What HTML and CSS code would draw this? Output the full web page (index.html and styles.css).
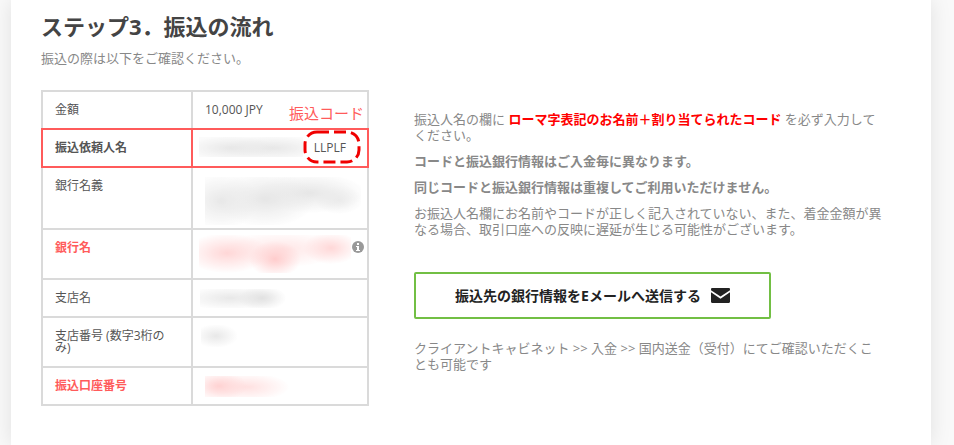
FILE: index.html
```html
<!DOCTYPE html>
<html lang="ja">
<head>
    <meta charset="UTF-8">
    <meta name="viewport" content="width=device-width, initial-scale=1.0">
    <title>振込の流れ</title>
    <link rel="stylesheet" href="styles.css">
</head>
<body>
    <main class="panel">
        <h2>ステップ3．振込の流れ</h2>
        <p class="lead">振込の際は以下をご確認ください。</p>

        <div class="columns">
            <table class="bank-table">
                <tr class="amount">
                    <th scope="row">金額</th>
                    <td>10,000 JPY <span class="code-note">振込コード</span></td>
                </tr>
                <tr class="sender">
                    <th scope="row">振込依頼人名</th>
                    <td>
                        <div class="hidden-text name"></div>
                        <span class="code">LLPLF
                            <svg viewBox="0 0 58 34"><rect x="2" y="2" width="54" height="30" rx="12"/></svg>
                        </span>
                    </td>
                </tr>
                <tr>
                    <th scope="row">銀行名義</th>
                    <td><div class="hidden-text holder"></div></td>
                </tr>
                <tr class="red">
                    <th scope="row">銀行名</th>
                    <td>
                        <div class="hidden-text bank"></div>
                        <svg class="info" viewBox="0 0 12 12"><circle cx="6" cy="6" r="6"/><path d="M5 2h2v2H5zM4 5h3v4h1v1H4V9h1V6H4z"/></svg>
                    </td>
                </tr>
                <tr>
                    <th scope="row">支店名</th>
                    <td><div class="hidden-text branch"></div></td>
                </tr>
                <tr>
                    <th scope="row">支店番号 (数字3桁のみ)</th>
                    <td><div class="hidden-text branch-no"></div></td>
                </tr>
                <tr class="red">
                    <th scope="row">振込口座番号</th>
                    <td><div class="hidden-text account"></div></td>
                </tr>
            </table>

            <div class="notes">
                <p>振込人名の欄に <strong class="warn">ローマ字表記のお名前＋割り当てられたコード</strong> を必ず入力してください。</p>
                <p><strong>コードと振込銀行情報はご入金毎に異なります。</strong></p>
                <p><strong>同じコードと振込銀行情報は重複してご利用いただけません。</strong></p>
                <p>お振込人名欄にお名前やコードが正しく記入されていない、また、着金金額が異なる場合、取引口座への反映に遅延が生じる可能性がございます。</p>
                <button type="button" class="send">
                    振込先の銀行情報をEメールへ送信する
                    <svg viewBox="0 0 18 14"><path d="M1 0h16a1 1 0 0 1 1 1v1L9 8 0 2V1a1 1 0 0 1 1-1z"/><path d="M0 4l9 6 9-6v9a1 1 0 0 1-1 1H1a1 1 0 0 1-1-1z"/></svg>
                </button>
                <p>クライアントキャビネット &gt;&gt; 入金 &gt;&gt; 国内送金（受付）にてご確認いただくことも可能です</p>
            </div>
        </div>
    </main>
</body>
</html>
```

FILE: styles.css
```css
* { box-sizing: border-box; }
body {
    margin: 0;
    padding: 0 23px 0 11px;
    background: #f9f9f9;
    color: #888;
    font-family: "Open Sans", "Noto Sans CJK JP", sans-serif;
    font-size: 13px;
    line-height: 16px;
}
.panel {
    min-height: 100vh;
    padding: 12px 30px 39px;
    background: #fff;
    box-shadow: 0 0 20px rgba(0, 0, 0, 0.1);
}
h2 {
    margin: 0 0 10px;
    color: #444;
    font-size: 22px;
    line-height: 28px;
}
p { margin: 0 0 10px; }
.lead { margin-bottom: 24px; }
.columns {
    display: flex;
    align-items: flex-start;
    gap: 45px;
}

/* 振込先テーブル */
.bank-table {
    flex: none;
    width: 328px;
    table-layout: fixed;
    border-collapse: collapse;
    color: #555;
    font-size: 12px;
    line-height: 12px;
}
.bank-table th, .bank-table td {
    position: relative;
    padding: 12px;
    border: 2px solid #dadada;
    text-align: left;
    vertical-align: top;
    font-weight: normal;
}
.bank-table th { width: 150px; padding-right: 20px; }
.bank-table .amount th, .bank-table .amount td { border-bottom-color: #ff5b5b; }
.bank-table .sender th { font-weight: bold; }
.bank-table .sender th, .bank-table .sender td { border-color: #ff5b5b; }
.bank-table .red th { color: #ff5b5b; font-weight: bold; }
.code-note {
    position: absolute;
    right: 3px;
    bottom: 6px;
    color: #ff5b5b;
    font-size: 15px;
    line-height: 18px;
}
.code {
    position: absolute;
    top: 12px;
    right: 21px;
}
.code svg {
    position: absolute;
    top: -12px;
    left: -11px;
    width: 58px;
    height: 34px;
    fill: none;
    stroke: #f00000;
    stroke-width: 3;
    stroke-dasharray: 12 5;
}
.info {
    position: absolute;
    top: 11px;
    right: 3px;
    width: 12px;
    height: 12px;
    fill: #999;
}
.info path { fill: #fff; }

/* ぼかした文字 */
.hidden-text { opacity: 0.7; }
.name {
    width: 104px;
    height: 20px;
    margin: -5px 0 -3px -6px;
    background:
        radial-gradient(ellipse 45px 12px at 32px 11px, #dedede, transparent),
        radial-gradient(ellipse 50px 12px at 74px 11px, #dedede, transparent),
        #fafafa;
}
.holder {
    width: 156px;
    height: 48px;
    margin: -3px 0 -9px;
    background:
        radial-gradient(ellipse 38px 28px at 16px 24px, #dfdfdf, transparent),
        radial-gradient(ellipse 50px 28px at 60px 22px, #dcdcdc, transparent),
        radial-gradient(ellipse 55px 20px at 105px 16px, #dcdcdc, transparent),
        radial-gradient(ellipse 24px 14px at 134px 23px, #e6e6e6, transparent);
}
.bank {
    width: 152px;
    height: 38px;
    margin: -7px 0 -7px -6px;
    background:
        radial-gradient(ellipse 26px 18px at 76px 24px, #ffb8b8, transparent),
        radial-gradient(ellipse 42px 20px at 28px 18px, #ffc6c6, transparent),
        radial-gradient(ellipse 28px 16px at 132px 13px, #ffc8c8, transparent),
        radial-gradient(ellipse 60px 18px at 84px 14px, #ffdcdc, transparent);
}
.branch {
    width: 86px;
    height: 19px;
    margin: -3px 0 -4px -5px;
    background:
        radial-gradient(ellipse 24px 12px at 62px 9px, #d6d6d6, transparent),
        radial-gradient(ellipse 48px 12px at 30px 9px, #dfdfdf, transparent);
}
.branch-no {
    width: 36px;
    height: 22px;
    margin: -5px 0 -5px -4px;
    background: radial-gradient(ellipse 22px 12px at 15px 11px, #dedede, transparent);
}
.account {
    width: 86px;
    height: 21px;
    margin: -4px 0 -5px;
    background:
        radial-gradient(ellipse 28px 15px at 14px 10px, #ffc0c0, transparent),
        radial-gradient(ellipse 42px 14px at 42px 11px, #ffd4d4, transparent);
}

.notes {
    flex: 1;
    max-width: 470px;
    padding-top: 21px;
}
.warn { color: #f00; }
.send {
    display: flex;
    align-items: center;
    justify-content: center;
    gap: 10px;
    width: 357px;
    max-width: 100%;
    height: 47px;
    margin: 35px 0 21px;
    border: 2px solid #72bf44;
    border-radius: 2px;
    background: #fff;
    color: #222;
    font: bold 14px/20px "Open Sans", "Noto Sans CJK JP", sans-serif;
}
.send svg {
    width: 19px;
    height: 15px;
    fill: #222;
}
```
